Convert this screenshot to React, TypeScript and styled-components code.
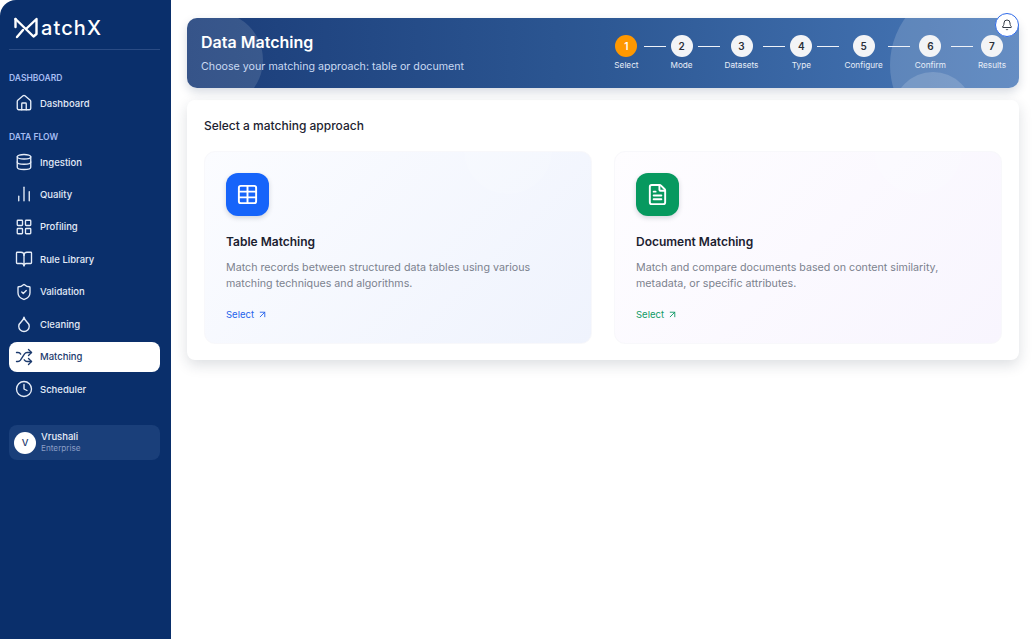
import React from "react";
import styled, { createGlobalStyle } from "styled-components";
import {
  House, Database, ChartNoAxesColumn, LayoutGrid, BookOpen, ShieldCheck, Droplet,
  Shuffle, Clock, Bell, Table, FileText, ArrowUpRight,
} from "lucide-react";

const Global = createGlobalStyle`
  html, body { margin: 0; padding: 0; background: #fff; }
  body { font-family: Inter, "Liberation Sans", sans-serif; }
  * { box-sizing: border-box; }
`;

const Page = styled.div`
  display: flex;
  width: 100%;
  height: 639px;
  overflow: hidden;
  background: #fff;
`;

const Sidebar = styled.aside`
  flex: 0 0 171px;
  height: 100%;
  background: #0a2f6b;
  border-top-left-radius: 16px;
  padding: 15px 11px 0 9px;
  display: flex;
  flex-direction: column;
`;

const Brand = styled.div`
  display: flex;
  align-items: center;
  height: 35px;
  padding-left: 5px;
  padding-bottom: 9px;
  border-bottom: 1px solid #2a4b84;
  color: #fff;
`;

const BrandText = styled.span`
  font-size: 20px;
  font-weight: 500;
  letter-spacing: 1.1px;
  margin-left: 3px;
  line-height: 1;
  font-family: Inter, sans-serif;
`;

const SectionLabel = styled.div<{ $top: number }>`
  margin-top: ${(p) => p.$top}px;
  height: 12px;
  line-height: 12px;
  margin-bottom: 4px;
  font-size: 8.5px;
  font-weight: 600;
  color: #a6bdf2;
`;

const NavList = styled.nav`
  display: flex;
  flex-direction: column;
  gap: 2.45px;
`;

const NavItem = styled.div<{ $active?: boolean }>`
  height: 30px;
  display: flex;
  align-items: center;
  gap: 7px;
  padding-left: 6px;
  border-radius: 8px;
  font-size: 9.5px;
  font-weight: 500;
  background: ${(p) => (p.$active ? "#fff" : "transparent")};
  color: ${(p) => (p.$active ? "#1c3a6e" : "#e3ebf7")};
  svg { flex: none; color: ${(p) => (p.$active ? "#1c3a6e" : "#e6edf8")}; }
`;

const UserCard = styled.div`
  margin-top: 21px;
  height: 35px;
  border-radius: 8px;
  background: #1a3f7a;
  display: flex;
  align-items: center;
  gap: 5px;
  padding-left: 5px;
`;

const Avatar = styled.div`
  width: 22px;
  height: 22px;
  border-radius: 50%;
  background: #fff;
  color: #1c3a6e;
  display: flex;
  align-items: center;
  justify-content: center;
  font-size: 9.5px;
  font-weight: 500;
`;

const UserInfo = styled.div`
  display: flex;
  flex-direction: column;
`;

const UserName = styled.span`
  font-size: 9.5px;
  font-weight: 500;
  color: #e8eef8;
  line-height: 12px;
`;

const UserPlan = styled.span`
  font-size: 8.2px;
  color: #8a9dc5;
  line-height: 11px;
`;

const Main = styled.main`
  flex: 1;
  padding: 18px 15px 0 16px;
  display: flex;
  flex-direction: column;
  gap: 12px;
  min-width: 0;
`;

const Header = styled.header`
  position: relative;
  height: 70px;
  border-radius: 10px;
  background: linear-gradient(90deg, #1b3d79 0%, #2d5894 50%, #4878b8 100%);
  box-shadow: 0 4px 10px rgba(30, 50, 90, 0.18);
  display: flex;
  align-items: center;
  justify-content: space-between;
  padding: 0 13px 0 14px;
`;

const HeaderClip = styled.div`
  position: absolute;
  inset: 0;
  border-radius: 10px;
  overflow: hidden;
  pointer-events: none;
`;

const Bubble = styled.div<{ $size: number; $left?: number; $right?: number; $top?: number; $bottom?: number; $alpha: number }>`
  position: absolute;
  width: ${(p) => p.$size}px;
  height: ${(p) => p.$size}px;
  border-radius: 50%;
  background: rgba(255, 255, 255, ${(p) => p.$alpha});
  ${(p) => (p.$left !== undefined ? `left:${p.$left}px;` : "")}
  ${(p) => (p.$right !== undefined ? `right:${p.$right}px;` : "")}
  ${(p) => (p.$top !== undefined ? `top:${p.$top}px;` : "")}
  ${(p) => (p.$bottom !== undefined ? `bottom:${p.$bottom}px;` : "")}
`;

const HeaderText = styled.div`
  position: relative;
  display: flex;
  flex-direction: column;
  gap: 8px;
  margin-top: -1px;
`;

const Title = styled.h1`
  margin: 0;
  font-size: 16px;
  line-height: 20px;
  font-weight: 600;
  color: #fff;
`;

const Subtitle = styled.p`
  margin: 0;
  font-size: 10.7px;
  line-height: 14px;
  color: #c9d9f2;
`;

const Stepper = styled.div`
  position: relative;
  display: flex;
  align-items: flex-start;
  gap: 5px;
  margin-top: 0;
`;

const Step = styled.div`
  display: flex;
  flex-direction: column;
  align-items: center;
  gap: 3px;
  min-width: 22px;
`;

const StepDot = styled.div<{ $current?: boolean }>`
  width: 22px;
  height: 22px;
  border-radius: 50%;
  background: ${(p) => (p.$current ? "#ff9800" : "#f3f4f6")};
  color: ${(p) => (p.$current ? "#fff" : "#2b2f38")};
  display: flex;
  align-items: center;
  justify-content: center;
  font-size: 10px;
  font-weight: 600;
`;

const StepLabel = styled.span`
  font-size: 8.2px;
  line-height: 11px;
  color: #e8eef8;
  white-space: nowrap;
`;

const StepLine = styled.div`
  width: 22px;
  height: 1px;
  margin-top: 11px;
  background: #eef2f9;
`;

const BellButton = styled.button`
  position: absolute;
  top: -5px;
  right: 0;
  width: 24px;
  height: 24px;
  padding: 0;
  border-radius: 50%;
  border: 1.5px solid #2f6bea;
  background: #fff;
  color: #333a46;
  display: flex;
  align-items: center;
  justify-content: center;
`;

const Panel = styled.section`
  height: 260px;
  background: #fff;
  border-radius: 8px;
  box-shadow: 0 5px 14px rgba(30, 40, 60, 0.15);
  padding: 18px 17px 0;
`;

const PanelTitle = styled.h2`
  margin: 0 0 17px;
  font-size: 12px;
  line-height: 16px;
  font-weight: 500;
  color: #1c2230;
`;

const CardGrid = styled.div`
  display: grid;
  grid-template-columns: 388px 388px;
  column-gap: 22px;
`;

const Card = styled.article<{ $from: string; $to: string }>`
  position: relative;
  overflow: hidden;
  height: 193px;
  border-radius: 11px;
  background: linear-gradient(135deg, ${(p) => p.$from}, ${(p) => p.$to});
  border: 1px solid #f8f8fb;
  padding: 21px 21px;
  display: flex;
  flex-direction: column;
`;

const IconTile = styled.div<{ $bg: string }>`
  width: 43px;
  height: 43px;
  border-radius: 12px;
  background: ${(p) => p.$bg};
  color: #fff;
  display: flex;
  align-items: center;
  justify-content: center;
  box-shadow: 0 2px 5px rgba(30, 40, 60, 0.18);
  position: relative;
`;

const CardTitle = styled.h3`
  position: relative;
  margin: 18px 0 0;
  font-size: 12px;
  line-height: 16px;
  font-weight: 600;
  color: #1b2130;
`;

const CardDesc = styled.p`
  position: relative;
  margin: 10px 0 0;
  font-size: 10.7px;
  line-height: 16.4px;
  color: #7c828e;
`;

const SelectLink = styled.span<{ $color: string }>`
  position: relative;
  margin-top: 16px;
  display: flex;
  align-items: center;
  gap: 3px;
  font-size: 9.5px;
  line-height: 12px;
  color: ${(p) => p.$color};
`;

const MarkSvg = styled.svg`
  flex: none;
`;

const Logo = () => (
  <MarkSvg width="24" height="22" viewBox="0 0 24 22" fill="none" stroke="#fff" strokeWidth="2.4" strokeLinecap="round" strokeLinejoin="round">
    <path d="M1.5 2 L19.5 19.5 L22.5 17 L22.5 2 L12.5 11.5" />
    <path d="M1.5 2 L1.5 10" />
    <path d="M9 13 L3 20" />
  </MarkSvg>
);

const nav1 = [{ label: "Dashboard", Icon: House }];
const nav2 = [
  { label: "Ingestion", Icon: Database },
  { label: "Quality", Icon: ChartNoAxesColumn },
  { label: "Profiling", Icon: LayoutGrid },
  { label: "Rule Library", Icon: BookOpen },
  { label: "Validation", Icon: ShieldCheck },
  { label: "Cleaning", Icon: Droplet },
  { label: "Matching", Icon: Shuffle, active: true },
  { label: "Scheduler", Icon: Clock },
];
const steps = ["Select", "Mode", "Datasets", "Type", "Configure", "Confirm", "Results"];

export default function App() {
  return (
    <Page>
      <Global />
      <Sidebar>
        <Brand>
          <Logo />
          <BrandText>atchX</BrandText>
        </Brand>
        <SectionLabel $top={22}>DASHBOARD</SectionLabel>
        <NavList>
          {nav1.map(({ label, Icon }) => (
            <NavItem key={label}>
              <Icon size={18} strokeWidth={1.8} />
              {label}
            </NavItem>
          ))}
        </NavList>
        <SectionLabel $top={13}>DATA FLOW</SectionLabel>
        <NavList>
          {nav2.map(({ label, Icon, active }) => (
            <NavItem key={label} $active={active}>
              <Icon size={18} strokeWidth={1.8} />
              {label}
            </NavItem>
          ))}
        </NavList>
        <UserCard>
          <Avatar>V</Avatar>
          <UserInfo>
            <UserName>Vrushali</UserName>
            <UserPlan>Enterprise</UserPlan>
          </UserInfo>
        </UserCard>
      </Sidebar>
      <Main>
        <Header>
          <HeaderClip>
            <Bubble $size={96} $left={-20} $bottom={-20} $alpha={0.12} />
            <Bubble $size={160} $right={-31} $top={-33} $alpha={0.16} />
            <Bubble $size={80} $right={46} $bottom={-64} $alpha={0.16} />
          </HeaderClip>
          <HeaderText>
            <Title>Data Matching</Title>
            <Subtitle>Choose your matching approach: table or document</Subtitle>
          </HeaderText>
          <Stepper>
            {steps.map((s, i) => (
              <React.Fragment key={s}>
                {i > 0 && <StepLine />}
                <Step>
                  <StepDot $current={i === 0}>{i + 1}</StepDot>
                  <StepLabel>{s}</StepLabel>
                </Step>
              </React.Fragment>
            ))}
          </Stepper>
          <BellButton aria-label="Notifications">
            <Bell size={12} strokeWidth={2} />
          </BellButton>
        </Header>
        <Panel>
          <PanelTitle>Select a matching approach</PanelTitle>
          <CardGrid>
            <Card $from="#fbfcff" $to="#eff3fd">
              <Bubble $size={88} $right={39} $top={-46} $alpha={0.15} />
              <IconTile $bg="#1664fa">
                <Table size={23} strokeWidth={2} />
              </IconTile>
              <CardTitle>Table Matching</CardTitle>
              <CardDesc>
                Match records between structured data tables using various
                <br />
                matching techniques and algorithms.
              </CardDesc>
              <SelectLink $color="#2563eb">
                Select <ArrowUpRight size={11} strokeWidth={2} />
              </SelectLink>
            </Card>
            <Card $from="#fefdff" $to="#f8f5fe">
              <Bubble $size={88} $right={39} $top={-46} $alpha={0.15} />
              <IconTile $bg="#07995f">
                <FileText size={23} strokeWidth={2} />
              </IconTile>
              <CardTitle>Document Matching</CardTitle>
              <CardDesc>
                Match and compare documents based on content similarity,
                <br />
                metadata, or specific attributes.
              </CardDesc>
              <SelectLink $color="#0f9a66">
                Select <ArrowUpRight size={11} strokeWidth={2} />
              </SelectLink>
            </Card>
          </CardGrid>
        </Panel>
      </Main>
    </Page>
  );
}
